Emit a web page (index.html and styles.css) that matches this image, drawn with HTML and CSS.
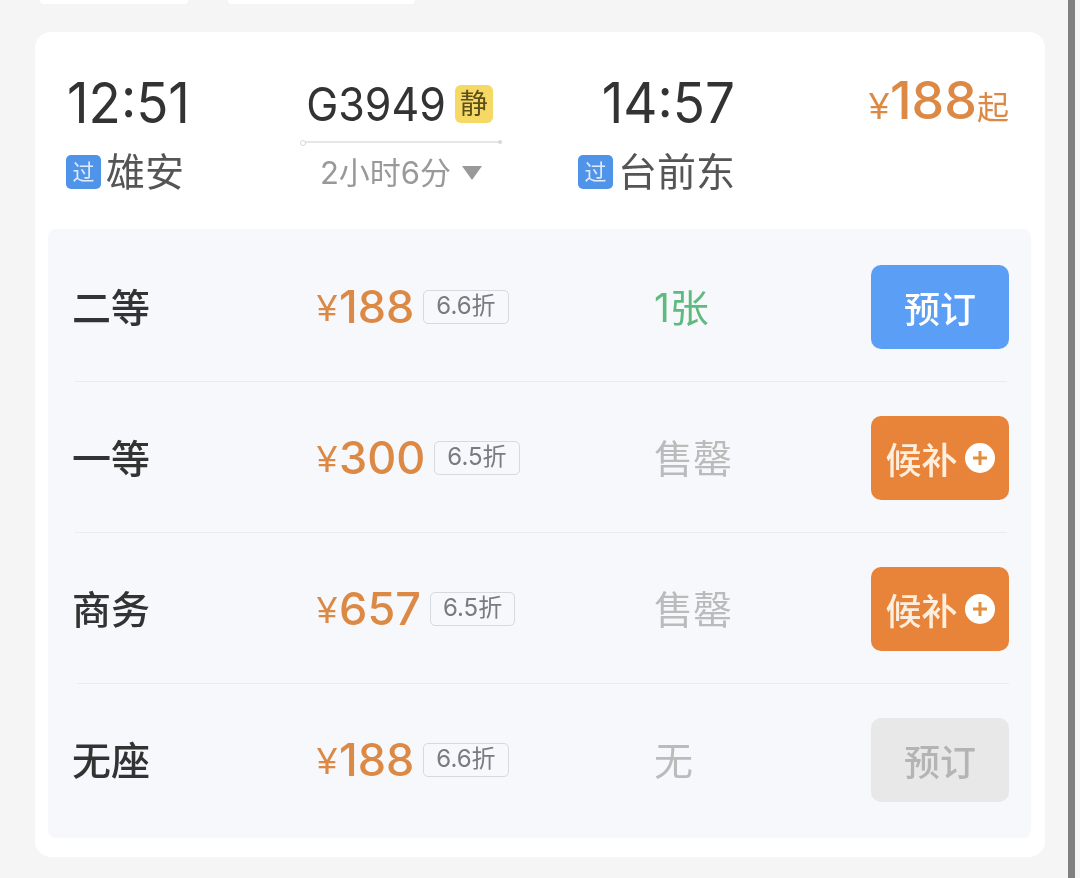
FILE: index.html
```html
<!DOCTYPE html>
<html lang="zh-CN">
<head>
<meta charset="utf-8">
<title>G3949</title>
<link rel="stylesheet" href="styles.css">
</head>
<body>
<div class="page">
  <main class="main">
    <div class="tabs">
      <div class="tab tab-a"></div>
      <div class="tab tab-b"></div>
    </div>
    <section class="card">
      <header class="head">
        <div class="stop">
          <div class="time time-start">12:51</div>
          <div class="station"><span class="pass">过</span><span>雄安</span></div>
        </div>
        <div class="train">
          <div class="train-no"><span class="train-code">G3949</span><span class="quiet">静</span></div>
          <div class="line"></div>
          <div class="dur"><span>2小时6分</span><span class="tri"></span></div>
        </div>
        <div class="stop stop-end">
          <div class="time">14:57</div>
          <div class="station"><span class="pass">过</span><span>台前东</span></div>
        </div>
        <div class="from"><span class="from-y">¥</span><span class="from-n">188</span><span class="from-q">起</span></div>
      </header>
      <div class="panel">
        <div class="row">
          <div class="seat">二等</div>
          <div class="price"><span class="y">¥</span><span class="n">188</span><span class="off">6.6折</span></div>
          <div class="stock ok">1张</div>
          <div class="btn blue">预订</div>
        </div>
        <div class="sep"></div>
        <div class="row">
          <div class="seat">一等</div>
          <div class="price"><span class="y">¥</span><span class="n">300</span><span class="off">6.5折</span></div>
          <div class="stock">售罄</div>
          <div class="btn orange"><span>候补</span><svg class="plus" viewBox="0 0 30 30"><circle cx="15" cy="15" r="15" fill="#fff"/><path d="M15 8v14M8 15h14" stroke="#e2903f" stroke-width="3" fill="none"/></svg></div>
        </div>
        <div class="sep"></div>
        <div class="row">
          <div class="seat">商务</div>
          <div class="price"><span class="y">¥</span><span class="n">657</span><span class="off">6.5折</span></div>
          <div class="stock">售罄</div>
          <div class="btn orange"><span>候补</span><svg class="plus" viewBox="0 0 30 30"><circle cx="15" cy="15" r="15" fill="#fff"/><path d="M15 8v14M8 15h14" stroke="#e2903f" stroke-width="3" fill="none"/></svg></div>
        </div>
        <div class="sep sep-shift"></div>
        <div class="row">
          <div class="seat">无座</div>
          <div class="price"><span class="y">¥</span><span class="n">188</span><span class="off">6.6折</span></div>
          <div class="stock">无</div>
          <div class="btn grey">预订</div>
        </div>
      </div>
    </section>
  </main>
  <div class="bar"></div>
</div>
</body>
</html>
```
FILE: styles.css
```css
* { box-sizing: border-box; }
html, body { margin: 0; height: 100%; }
body {
  background: #f5f5f5;
  font-family: Inter, "Noto Sans CJK SC", sans-serif;
  overflow: hidden;
}
.page { display: flex; height: 878px; }
.main { width: 1068px; padding-left: 35px; filter: blur(0.4px); }
.bar { width: 7px; background: #808080; }

.tabs { display: flex; height: 4px; padding-left: 5px; gap: 40px; }
.tab { background: #fff; height: 4px; border-radius: 0 0 8px 8px; }
.tab-a { width: 148px; }
.tab-b { width: 187px; }

.card {
  width: 1010px;
  height: 825px;
  margin-top: 28px;
  background: #fff;
  border-radius: 16px;
  padding: 0 14px 0 13px;
}
.head {
  display: grid;
  grid-template-columns: 235px 200px 75px 159px 1fr;
  height: 197px;
  padding: 38px 22px 0 18px;
}
.stop { display: flex; flex-direction: column; align-items: flex-start; }
.stop-end { grid-column: 4; align-items: flex-end; }
.time {
  font-size: 53px;
  line-height: 62px;
  color: #333;
  transform: scaleY(1.05);
  transform-origin: 50% 0;
  margin-top: 1px;
}
.time-start { margin-left: 1px; }
.station {
  display: flex;
  align-items: center;
  gap: 5px;
  margin-top: 16px;
  font-size: 39px;
  line-height: 46px;
  color: #555;
  white-space: nowrap;
}
.pass {
  width: 35px;
  height: 34px;
  border-radius: 5px;
  background: #4f94e8;
  color: #dfeafa;
  font-size: 22px;
  line-height: 34px;
  text-align: center;
}
.train { display: flex; flex-direction: column; align-items: center; }
.train-no {
  display: flex;
  align-items: center;
  gap: 9px;
  height: 62px;
  padding-top: 6px;
  margin-right: 3px;
  font-size: 43px;
  color: #333;
}
.train-code { transform: scaleY(1.08); }
.quiet {
  width: 38px;
  height: 38px;
  border-radius: 6px;
  background: #f5d964;
  color: #5d4f1c;
  font-size: 28px;
  line-height: 38px;
  text-align: center;
}
.line { position: relative; width: 200px; height: 2px; margin-top: 9px; background: #e6e6e6; }
.line::before, .line::after {
  content: "";
  position: absolute;
  top: -1px;
  width: 4px;
  height: 4px;
  border-radius: 50%;
}
.line::before { left: -1px; background: #fff; border: 1px solid #d8d8d8; }
.line::after { right: -1px; background: #d8d8d8; }
.dur {
  display: flex;
  align-items: center;
  gap: 11px;
  margin-top: 10px;
  font-size: 31px;
  line-height: 40px;
  color: #999;
}
.tri {
  width: 0;
  height: 0;
  border-left: 10px solid transparent;
  border-right: 10px solid transparent;
  border-top: 14px solid #999;
}
.from {
  grid-column: 5;
  display: flex;
  justify-content: flex-end;
  align-items: baseline;
  height: 62px;
  color: #dc8945;
  white-space: nowrap;
}
.from-y { font-family: "Liberation Sans", sans-serif; font-size: 36px; margin-right: 1px; }
.from-n { font-size: 52px; font-weight: 500; line-height: 62px; }
.from-q { font-size: 32px; }

.panel {
  width: 983px;
  height: 609px;
  padding-top: 2px;
  background: #f6f8fc;
  border-radius: 8px;
}
.row {
  display: grid;
  grid-template-columns: 245px 337px 1fr 138px;
  align-items: center;
  height: 150px;
  padding: 1px 22px 0 24px;
}
.sep { height: 1px; margin: 0 24px 0 27px; background: #e9ebef; }
.sep-shift { margin: 0 22px 0 29px; }
.seat { font-size: 39px; font-weight: 500; color: #333; line-height: 46px; margin-top: 2px; }
.price { display: flex; align-items: center; color: #dc8945; white-space: nowrap; }
.y { font-family: "Liberation Sans", sans-serif; font-size: 36px; margin-top: 5px; margin-right: 2px; }
.n { font-size: 45px; font-weight: 500; line-height: 54px; margin-right: 9px; }
.off {
  height: 34px;
  padding: 0 12px;
  border: 1.5px solid #d6d9df;
  border-radius: 5px;
  color: #777b82;
  font-size: 24px;
  line-height: 30px;
}
.stock { font-size: 39px; color: #bbb; line-height: 46px; margin-top: 2px; }
.stock.ok { color: #5fba7d; }
.btn {
  display: flex;
  align-items: center;
  justify-content: center;
  width: 138px;
  height: 84px;
  border-radius: 10px;
  font-size: 36px;
  font-weight: 500;
  color: #fff;
}
.blue { background: #5a9ef5; }
.orange { background: #e8833a; color: #fdeedd; gap: 7px; }
.grey { background: #e8e8e8; color: #b4b4b4; }
.plus { width: 30px; height: 30px; }
```
